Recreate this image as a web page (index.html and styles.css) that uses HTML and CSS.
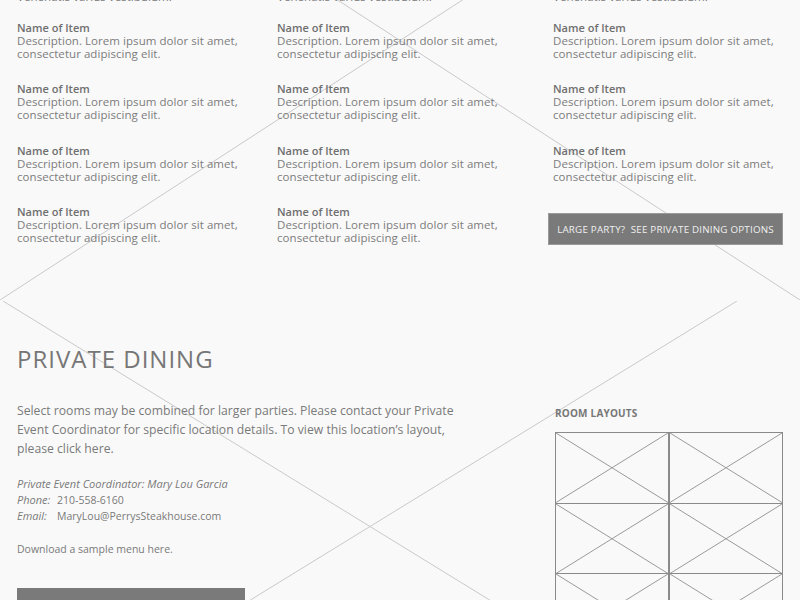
FILE: index.html
```html
<!DOCTYPE html>
<html lang="en">
<head>
<meta charset="utf-8">
<title>Private Dining</title>
<link rel="stylesheet" href="styles.css">
</head>
<body>
<section class="menu">
  <svg class="bgx bgx-top" viewBox="0 0 800 519" preserveAspectRatio="none" aria-hidden="true">
    <line x1="0" y1="0" x2="800" y2="519"/>
    <line x1="800" y1="0" x2="0" y2="519"/>
  </svg>
  <div class="cols">
    <div class="col col1">
      <p class="cut">Venenatis varius vestibulum.</p>
      <div class="item"><h4>Name of Item</h4><p>Description. Lorem ipsum dolor sit amet,<br>consectetur adipiscing elit.</p></div>
      <div class="item"><h4>Name of Item</h4><p>Description. Lorem ipsum dolor sit amet,<br>consectetur adipiscing elit.</p></div>
      <div class="item"><h4>Name of Item</h4><p>Description. Lorem ipsum dolor sit amet,<br>consectetur adipiscing elit.</p></div>
      <div class="item"><h4>Name of Item</h4><p>Description. Lorem ipsum dolor sit amet,<br>consectetur adipiscing elit.</p></div>
    </div>
    <div class="col col2">
      <p class="cut">Venenatis varius vestibulum.</p>
      <div class="item"><h4>Name of Item</h4><p>Description. Lorem ipsum dolor sit amet,<br>consectetur adipiscing elit.</p></div>
      <div class="item"><h4>Name of Item</h4><p>Description. Lorem ipsum dolor sit amet,<br>consectetur adipiscing elit.</p></div>
      <div class="item"><h4>Name of Item</h4><p>Description. Lorem ipsum dolor sit amet,<br>consectetur adipiscing elit.</p></div>
      <div class="item"><h4>Name of Item</h4><p>Description. Lorem ipsum dolor sit amet,<br>consectetur adipiscing elit.</p></div>
    </div>
    <div class="col col3">
      <p class="cut">Venenatis varius vestibulum.</p>
      <div class="item"><h4>Name of Item</h4><p>Description. Lorem ipsum dolor sit amet,<br>consectetur adipiscing elit.</p></div>
      <div class="item"><h4>Name of Item</h4><p>Description. Lorem ipsum dolor sit amet,<br>consectetur adipiscing elit.</p></div>
      <div class="item"><h4>Name of Item</h4><p>Description. Lorem ipsum dolor sit amet,<br>consectetur adipiscing elit.</p></div>
      <a class="btn party" href="#">LARGE PARTY?&nbsp; SEE PRIVATE DINING OPTIONS</a>
    </div>
  </div>
</section>

<section class="private">
  <svg class="bgx bgx-bottom" viewBox="0 0 734 451" preserveAspectRatio="none" aria-hidden="true">
    <line x1="0" y1="0" x2="734" y2="451"/>
    <line x1="734" y1="0" x2="0" y2="451"/>
  </svg>
  <div class="pd-main">
    <h2>PRIVATE DINING</h2>
    <p class="lead">Select rooms may be combined for larger parties. Please contact your Private Event Coordinator for specific location details. To view this location’s layout, please click here.</p>
    <div class="contact">
      <p><em>Private Event Coordinator: Mary Lou Garcia</em></p>
      <p><em class="lbl">Phone:</em>210-558-6160</p>
      <p><em class="lbl">Email:</em>MaryLou@PerrysSteakhouse.com</p>
    </div>
    <p class="download">Download a sample menu here.</p>
    <a class="btn big" href="#"></a>
  </div>
  <aside class="pd-side">
    <h5>ROOM LAYOUTS</h5>
    <div class="rooms">
      <div class="room"><svg viewBox="0 0 100 100" preserveAspectRatio="none"><line x1="0" y1="0" x2="100" y2="100"/><line x1="100" y1="0" x2="0" y2="100"/></svg></div>
      <div class="room"><svg viewBox="0 0 100 100" preserveAspectRatio="none"><line x1="0" y1="0" x2="100" y2="100"/><line x1="100" y1="0" x2="0" y2="100"/></svg></div>
      <div class="room"><svg viewBox="0 0 100 100" preserveAspectRatio="none"><line x1="0" y1="0" x2="100" y2="100"/><line x1="100" y1="0" x2="0" y2="100"/></svg></div>
      <div class="room"><svg viewBox="0 0 100 100" preserveAspectRatio="none"><line x1="0" y1="0" x2="100" y2="100"/><line x1="100" y1="0" x2="0" y2="100"/></svg></div>
      <div class="room"><svg viewBox="0 0 100 100" preserveAspectRatio="none"><line x1="0" y1="0" x2="100" y2="100"/><line x1="100" y1="0" x2="0" y2="100"/></svg></div>
      <div class="room"><svg viewBox="0 0 100 100" preserveAspectRatio="none"><line x1="0" y1="0" x2="100" y2="100"/><line x1="100" y1="0" x2="0" y2="100"/></svg></div>
    </div>
  </aside>
</section>
</body>
</html>
```

FILE: styles.css
```css
html, body {
  margin: 0;
  padding: 0;
}
body {
  background: #f9f9f9;
  color: #7a7a7a;
  font-family: "Open Sans", "DejaVu Sans", sans-serif;
  width: 800px;
  height: 600px;
  overflow: hidden;
}
p, h2, h4, h5 { margin: 0; }

.bgx {
  position: absolute;
  pointer-events: none;
  z-index: 0;
}
.bgx line {
  stroke: #c9c9c9;
  stroke-width: 1;
  vector-effect: non-scaling-stroke;
}

/* ---------- menu ---------- */
.menu {
  position: relative;
  display: flow-root;
  height: 300px;
}
.bgx-top {
  left: 0;
  top: -219px;
  width: 800px;
  height: 519px;
}
.cols {
  position: relative;
  z-index: 1;
  display: grid;
  grid-template-columns: 260px 271px 235px;
  padding-left: 17px;
  margin-top: -10.5px;
}
.cut {
  font-size: 11.5px;
  line-height: 13px;
  letter-spacing: 0.05px;
  color: #7a7a7a;
  margin-bottom: 18px;
}
.item {
  font-size: 11.5px;
  line-height: 13px;
  letter-spacing: 0.05px;
  margin-bottom: 22.5px;
}
.item h4 {
  font-size: 11px;
  font-weight: 600;
  letter-spacing: 0;
  color: #6f6f6f;
}
.item p { color: #7c7c7c; }
.col3 .cut, .col3 .item { padding-left: 5px; }

.btn {
  display: flex;
  align-items: center;
  justify-content: center;
  background: #7a7a7a;
  color: #f0f0f0;
  text-decoration: none;
}
.party {
  height: 32px;
  margin-top: 30.5px;
  font-size: 9.8px;
  letter-spacing: 0.2px;
  border: 1px solid #9a9a9a;
  box-sizing: border-box;
}

/* ---------- private dining ---------- */
.private {
  position: relative;
  height: 300px;
  display: flex;
  padding-left: 17px;
}
.bgx-bottom {
  left: 3px;
  top: 1px;
  width: 734px;
  height: 451px;
}
.pd-main {
  position: relative;
  z-index: 1;
  width: 450px;
  padding-top: 44px;
}
.pd-main h2 {
  font-size: 24px;
  line-height: 29px;
  font-weight: 400;
  color: #767676;
  letter-spacing: 1px;
}
.lead {
  margin-top: 28px;
  font-size: 12.2px;
  line-height: 19px;
  color: #7a7a7a;
}
.contact {
  margin-top: 18px;
  font-size: 10.5px;
  line-height: 16px;
}
.contact em { font-size: 11px; }
.lbl {
  display: inline-block;
  width: 40px;
}
.download {
  margin-top: 17px;
  font-size: 10.5px;
  line-height: 16px;
}
.big {
  margin-top: 31px;
  width: 228px;
  height: 40px;
}

.pd-side {
  position: relative;
  z-index: 1;
  margin-left: 88px;
  width: 228px;
  padding-top: 106px;
}
.pd-side h5 {
  font-size: 10px;
  line-height: 14px;
  font-weight: 700;
  color: #777;
  letter-spacing: 0.2px;
}
.rooms {
  margin-top: 13px;
  display: grid;
  grid-template-columns: 1fr 1fr;
  grid-auto-rows: 70.5px;
}
.room {
  border: 1px solid #8a8a8a;
  margin-top: -1px;
  position: relative;
}
.room svg {
  position: absolute;
  inset: 0;
  width: 100%;
  height: 100%;
}
.room line {
  stroke: #9a9a9a;
  stroke-width: 1;
  vector-effect: non-scaling-stroke;
}
```
